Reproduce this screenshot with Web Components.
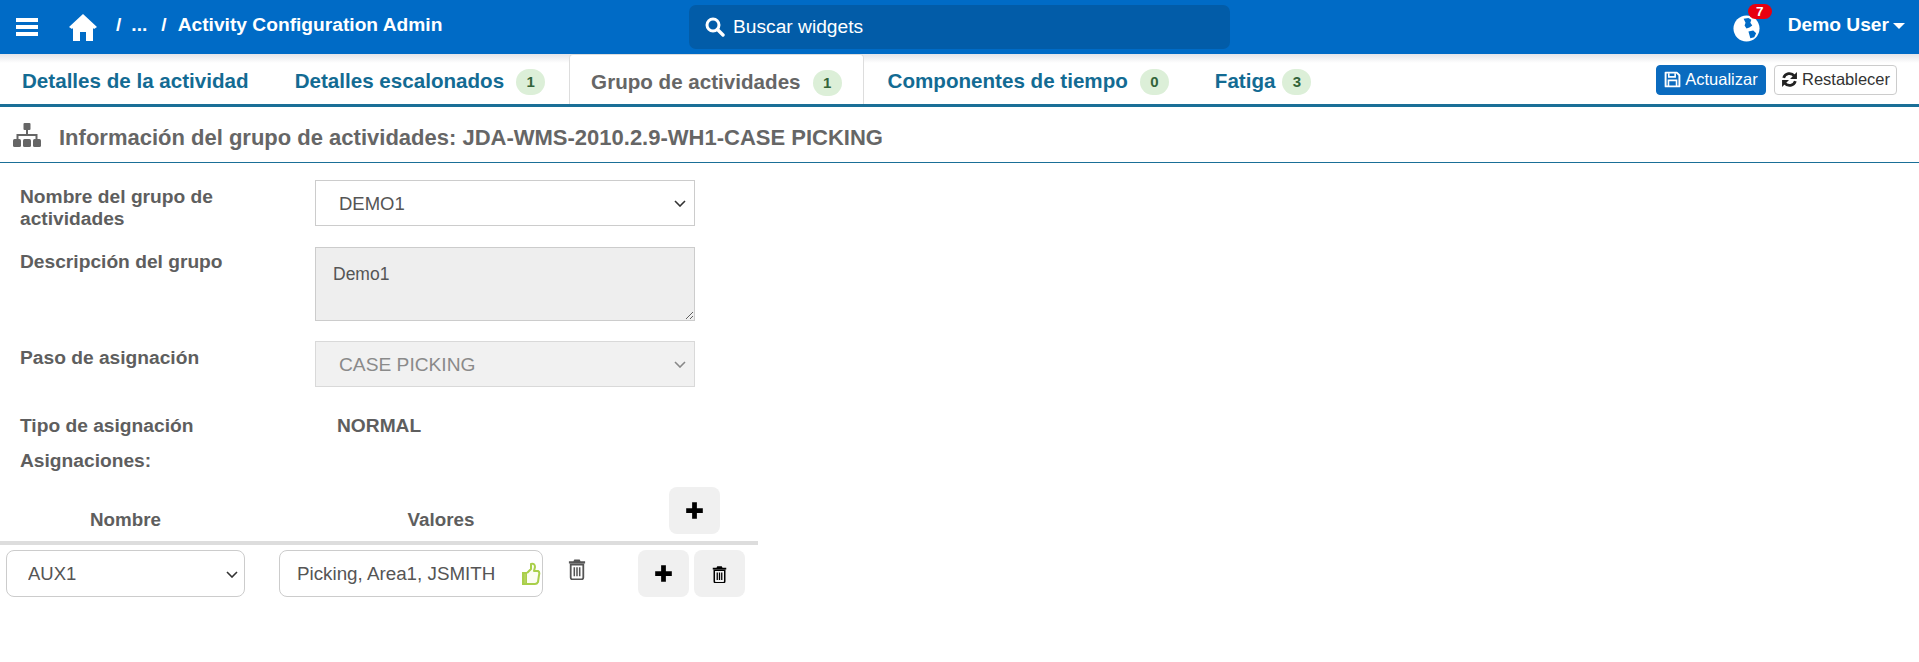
<!DOCTYPE html>
<html lang="es">
<head>
<meta charset="utf-8">
<title>Activity Configuration Admin</title>
<style>
  html, body { margin: 0; padding: 0; background: #fff; font-family: "Liberation Sans", Arial, sans-serif; }
  body { width: 1919px; height: 662px; overflow: hidden; }
</style>
</head>
<body>
<app-header></app-header>
<tab-bar>
  <tab-item>Detalles de la actividad</tab-item>
  <tab-item badge="1">Detalles escalonados</tab-item>
  <tab-item badge="1" active>Grupo de actividades</tab-item>
  <tab-item badge="0">Componentes de tiempo</tab-item>
  <tab-item badge="3" tight>Fatiga</tab-item>
</tab-bar>
<section-title>Información del grupo de actividades: JDA-WMS-2010.2.9-WH1-CASE PICKING</section-title>
<group-form></group-form>
<assign-table></assign-table>

<script>
// iconos compartidos
const ICONS = {
  trash: `<svg viewBox="0 0 20 24" width="100%" height="100%"><path d="M7 1.500h6l1 2h5v2.500H1V3.500h5z" fill="currentColor"/><path d="M3 7h14v14.500a2 2 0 0 1-2 2H5a2 2 0 0 1-2-2z" fill="none" stroke="currentColor" stroke-width="2"/><path d="M7 10v10M10 10v10M13 10v10" stroke="currentColor" stroke-width="1.700"/></svg>`,
  plus: `<svg viewBox="0 0 16 16" width="100%" height="100%"><path d="M6 1h4v5h5v4h-5v5H6v-5H1V6h5z" fill="currentColor"/></svg>`
}

class AppHeader extends HTMLElement {
  constructor() {
    super();
    this.attachShadow({ mode: 'open' });
    this.shadowRoot.innerHTML = `
      <style>
        :host { display: flex; align-items: center; height: 54px; background: #006bc6; color: #fff; position: relative; z-index: 2; }
        .left { display: flex; align-items: center; width: 689px; font-weight: bold; font-size: 19.200px; }
        .bars { margin-left: 16px; width: 22px; height: 20px; }
        .home { margin-left: 31px; width: 28px; height: 27px; margin-top: 1px; }
        .crumb { display: flex; margin-top: -5px; white-space: pre; }
        .s1 { margin-left: 19px; } .s2 { margin-left: 10px; } .s3 { margin-left: 14px; } .s4 { margin-left: 11px; }
        .search { width: 541px; height: 44px; box-sizing: border-box; background: #025ca8; border-radius: 7px; display: flex; align-items: center; padding-left: 16px; gap: 8px; font-size: 19.200px; }
        .search svg { width: 20px; height: 20px; }
        .right { margin-left: auto; display: flex; align-items: center; font-weight: bold; font-size: 19.200px; }
        .globe { position: relative; width: 27px; height: 27px; margin-right: 28px; margin-top: 2px; }
        .globe svg { width: 100%; height: 100%; display: block; }
        .count { position: absolute; left: 15px; top: -11px; background: #e8000f; border-radius: 10px; width: 24px; height: 15px; line-height: 15px; text-align: center; font-size: 13.500px; }
        .user { margin-right: 14px; margin-top: -5px; display: flex; align-items: center; gap: 4px; }
        .caret { width: 0; height: 0; border-left: 6px solid transparent; border-right: 6px solid transparent; border-top: 6px solid #fff; margin-top: 2px; }
      </style>
      <div class="left">
        <svg class="bars" viewBox="0 0 22 20"><path d="M0 1h22v4H0zM0 8h22v4H0zM0 15h22v4H0z" fill="#fff"/></svg>
        <svg class="home" viewBox="0 0 28 27"><path d="M14 0 L28 13 L25 15 L24 14 V27 H17 V18 H11 V27 H4 V14 L3 15 L0 13 Z" fill="#fff"/></svg>
        <div class="crumb"><span class="s1">/</span><span class="s2">...</span><span class="s3">/</span><span class="s4">Activity Configuration Admin</span></div>
      </div>
      <div class="search">
        <svg viewBox="0 0 20 20"><circle cx="8" cy="8" r="6" fill="none" stroke="#fff" stroke-width="3"/><path d="M12.500 12.500 L18 18" stroke="#fff" stroke-width="3.400" stroke-linecap="round"/></svg>
        <span>Buscar widgets</span>
      </div>
      <div class="right">
        <div class="globe">
          <svg viewBox="0 0 28 28"><circle cx="14" cy="14" r="13.500" fill="#fff"/><path d="M11 4 L16 3 L19 5 L18 8 L20 11 L17 13 L14 14 L12 11 L13 8 Z" fill="#006bc6"/><path d="M16 17 L21 16 L24 19 L22 23 L18 24 Z" fill="#006bc6"/></svg>
          <span class="count">7</span>
        </div>
        <div class="user"><span>Demo User</span><span class="caret"></span></div>
      </div>`;
  }
}
customElements.define('app-header', AppHeader);

class TabBar extends HTMLElement {
  constructor() {
    super();
    this.attachShadow({ mode: 'open' });
    this.shadowRoot.innerHTML = `
      <style>
        :host { display: flex; height: 53px; box-sizing: border-box; border-bottom: 3px solid #1a6f97; background: linear-gradient(#e4e4e8 0, #fff 9px); }
        .tabs { display: flex; gap: 2px; }
        .actions { margin-left: auto; display: flex; align-items: center; gap: 8px; padding: 1px 22px 0 0; font-size: 16.500px; }
        button { font: inherit; height: 30px; box-sizing: border-box; border-radius: 4px; display: flex; align-items: center; gap: 4px; padding: 0; justify-content: center; }
        .save { width: 110px; background: #0a6bbf; border: 1px solid #0a6bbf; color: #fff; }
        .reset { width: 123px; background: #fff; border: 1px solid #ccc; color: #333; }
        svg { width: 17px; height: 17px; }
      </style>
      <div class="tabs"><slot></slot></div>
      <div class="actions">
        <button class="save"><svg viewBox="0 0 16 16"><path d="M1.500 1.500h10.500l2.500 2.500v10.500h-13z" fill="none" stroke="#fff" stroke-width="1.800" stroke-linejoin="round"/><path d="M4.500 2v3.500h6V2" fill="none" stroke="#fff" stroke-width="1.500"/><path d="M4.200 14v-5.200h7.600V14" fill="none" stroke="#fff" stroke-width="1.500"/></svg>Actualizar</button>
        <button class="reset"><svg viewBox="0 0 16 16"><path d="M2.500 6.500A5.800 5.800 0 0 1 12.500 4.500" fill="none" stroke="#222" stroke-width="2.600"/><path d="M15 1v6.500H8.500z" fill="#222"/><path d="M13.500 9.500A5.800 5.800 0 0 1 3.500 11.500" fill="none" stroke="#222" stroke-width="2.600"/><path d="M1 15V8.500h6.500z" fill="#222"/></svg>Restablecer</button>
      </div>`;
  }
}
customElements.define('tab-bar', TabBar);

class TabItem extends HTMLElement {
  constructor() {
    super();
    this.attachShadow({ mode: 'open' });
  }
  connectedCallback() {
    this.render();
  }
  render() {
    const badge = this.getAttribute('badge');
    this.shadowRoot.innerHTML = `
      <style>
        :host { display: flex; align-items: center; height: 50px; box-sizing: border-box; padding: 4px 22px 0; font-weight: bold; font-size: 20.600px; color: #136b93; white-space: nowrap; }
        :host([active]) { color: #666; background: #fff; border: 1px solid #ddd; border-bottom: 0; border-radius: 4px 4px 0 0; padding: 4px 21px 0; }
        .badge { margin-left: 12px; width: 29px; height: 26px; border-radius: 14px; background: #dcefd8; color: #33643a; font-size: 15px; text-align: center; line-height: 26px; margin-top: 2px; }
        :host([tight]) .badge { margin-left: 7px; }
      </style>
      <slot></slot>${badge !== null ? `<span class="badge">${badge}</span>` : ''}`;
  }
}
customElements.define('tab-item', TabItem);

class SectionTitle extends HTMLElement {
  constructor() {
    super();
    this.attachShadow({ mode: 'open' });
    this.shadowRoot.innerHTML = `
      <style>
        :host { display: flex; align-items: center; height: 56px; box-sizing: border-box; border-bottom: 1px solid #1a6f97; padding: 7px 0 0 12px; font-weight: bold; font-size: 22px; color: #666; }
        svg { width: 28px; height: 24px; margin: -7px 18px 0 1px; }
      </style>
      <svg viewBox="0 0 28 24"><rect x="10.500" y="0" width="7" height="7" rx="1" fill="#666"/><path d="M14 7v5M4.500 16v-4h19v4" fill="none" stroke="#666" stroke-width="2"/><rect x="0" y="16" width="8" height="8" rx="1.500" fill="#666"/><rect x="10" y="16" width="8" height="8" rx="1.500" fill="#666"/><rect x="20" y="16" width="8" height="8" rx="1.500" fill="#666"/></svg>
      <span><slot></slot></span>`;
  }
}
customElements.define('section-title', SectionTitle);

// select con flecha propia, la nativa no se parece
class AppSelect extends HTMLElement {
  constructor() {
    super();
    this.attachShadow({ mode: 'open' });
  }
  connectedCallback() {
    const dis = this.hasAttribute('disabled') ? 'disabled' : '';
    this.shadowRoot.innerHTML = `
      <style>
        :host { display: block; position: relative; }
        select { appearance: none; font-family: "Liberation Sans", Arial, sans-serif; font-weight: normal; font-size: 18.500px; color: #555; background: #fff; border: 1px solid #ccc; border-radius: var(--radius, 0); box-sizing: border-box; width: 100%; height: var(--h, 46px); padding-left: var(--pad, 23px); display: block; }
        select:disabled { background: #f1f1f1; color: #8a8a8a; opacity: 1; border-color: #d9d9d9; font-size: 19.200px; }
        svg { position: absolute; right: var(--arrow, 9px); top: 50%; margin-top: -3px; width: 12px; height: 7px; pointer-events: none; color: #333; }
        select:disabled + svg { color: #888; }
      </style>
      <select ${dis}><option>${this.getAttribute('value')}</option></select>
      <svg viewBox="0 0 12 7"><path d="M1 1l5 5 5-5" fill="none" stroke="currentColor" stroke-width="1.600"/></svg>`;
  }
}
customElements.define('app-select', AppSelect);

class GroupForm extends HTMLElement {
  constructor() {
    super();
    this.attachShadow({ mode: 'open' });
    this.shadowRoot.innerHTML = `
      <style>
        :host { display: grid; grid-template-columns: 295px 380px; padding: 17px 0 0 20px; font-size: 19.200px; color: #5e5e5e; font-weight: bold; }
        .lab { line-height: 22px; }
        textarea { font-family: inherit; font-weight: normal; font-size: 17.500px; color: #555; border: 1px solid #ccc; box-sizing: border-box; width: 380px; display: block; height: 74px; background: #eee; padding: 16px 17px 10px; resize: vertical; }
        .r1 { margin-bottom: 17px; } .r2 { margin-bottom: 20px; } .r3 { margin-bottom: 28px; }
        .l1 { padding-top: 6px; } .l2 { padding-top: 4px; } .l3 { padding-top: 6px; }
        .normal { line-height: 22px; padding-left: 22px; }
        .wide { grid-column: 1 / 3; margin-top: 13px; line-height: 22px; }
      </style>
      <div class="lab l1 r1">Nombre del grupo de<br>actividades</div>
      <div class="r1"><app-select value="DEMO1"></app-select></div>
      <div class="lab l2 r2">Descripción del grupo</div>
      <div class="r2"><textarea disabled>Demo1</textarea></div>
      <div class="lab l3 r3">Paso de asignación</div>
      <div class="r3"><app-select value="CASE PICKING" disabled></app-select></div>
      <div class="lab">Tipo de asignación</div>
      <div class="normal">NORMAL</div>
      <div class="wide">Asignaciones:</div>`;
  }
}
customElements.define('group-form', GroupForm);

class IconButton extends HTMLElement {
  constructor() {
    super();
    this.attachShadow({ mode: 'open' });
  }
  connectedCallback() {
    const trash = this.getAttribute('icon') === 'trash';
    this.shadowRoot.innerHTML = `
      <style>
        :host { display: flex; align-items: center; justify-content: center; width: 51px; height: 47px; background: #f0f0f0; border-radius: 8px; color: #000; }
        span { display: block; width: ${trash ? 15 : 19}px; height: ${trash ? 18 : 19}px; }
      </style>
      <span>${ICONS[this.getAttribute('icon')]}</span>`;
  }
}
customElements.define('icon-button', IconButton);

class AssignTable extends HTMLElement {
  constructor() {
    super();
    this.attachShadow({ mode: 'open' });
    this.shadowRoot.innerHTML = `
      <style>
        :host { display: block; width: 758px; margin-top: 15px; font-size: 18.800px; color: #5e5e5e; }
        .head { display: grid; grid-template-columns: 251px 380px 38px 51px; align-items: end; height: 58px; box-sizing: border-box; border-bottom: 4px solid #ddd; font-weight: bold; }
        .head div { text-align: center; line-height: 25px; padding-bottom: 9px; }
        .head icon-button { grid-column: 4; align-self: start; }
        .row { display: flex; align-items: center; padding: 5px 0 0 6px; }
        app-select { width: 239px; margin-right: 34px; --radius: 8px; --h: 47px; --pad: 21px; --arrow: 7px; }
        .val { font-size: 18.800px; color: #555; background: #fff; border: 1px solid #ccc; border-radius: 8px; box-sizing: border-box; height: 47px; width: 264px; display: flex; align-items: center; padding-left: 17px; position: relative; white-space: nowrap; }
        .thumb { position: absolute; right: 1px; top: 11px; width: 20px; height: 24px; }
        .del { width: 18px; height: 22px; margin: -9px 52px 0 25px; color: #555; }
        .row icon-button + icon-button { margin-left: 5px; }
      </style>
      <div class="head">
        <div>Nombre</div>
        <div>Valores</div>
        <icon-button icon="plus"></icon-button>
      </div>
      <div class="row">
        <app-select value="AUX1"></app-select>
        <div class="val">Picking, Area1, JSMITH
          <svg class="thumb" viewBox="0 0 20 24"><path d="M2 11h4v11H2z" fill="#b5d35c" stroke="#a9cf4a" stroke-width="2"/><path d="M6 11 L10 7 V2 Q14 1 14 5 L13 9 H17 Q19 10 18 13 L17 20 Q16 22 14 22 H6" fill="#fbfdf2" stroke="#a9cf4a" stroke-width="2" stroke-linejoin="round"/></svg>
        </div>
        <div class="del">${ICONS.trash}</div>
        <icon-button icon="plus"></icon-button>
        <icon-button icon="trash"></icon-button>
      </div>`;
  }
}
customElements.define('assign-table', AssignTable);
</script>
</body>
</html>
